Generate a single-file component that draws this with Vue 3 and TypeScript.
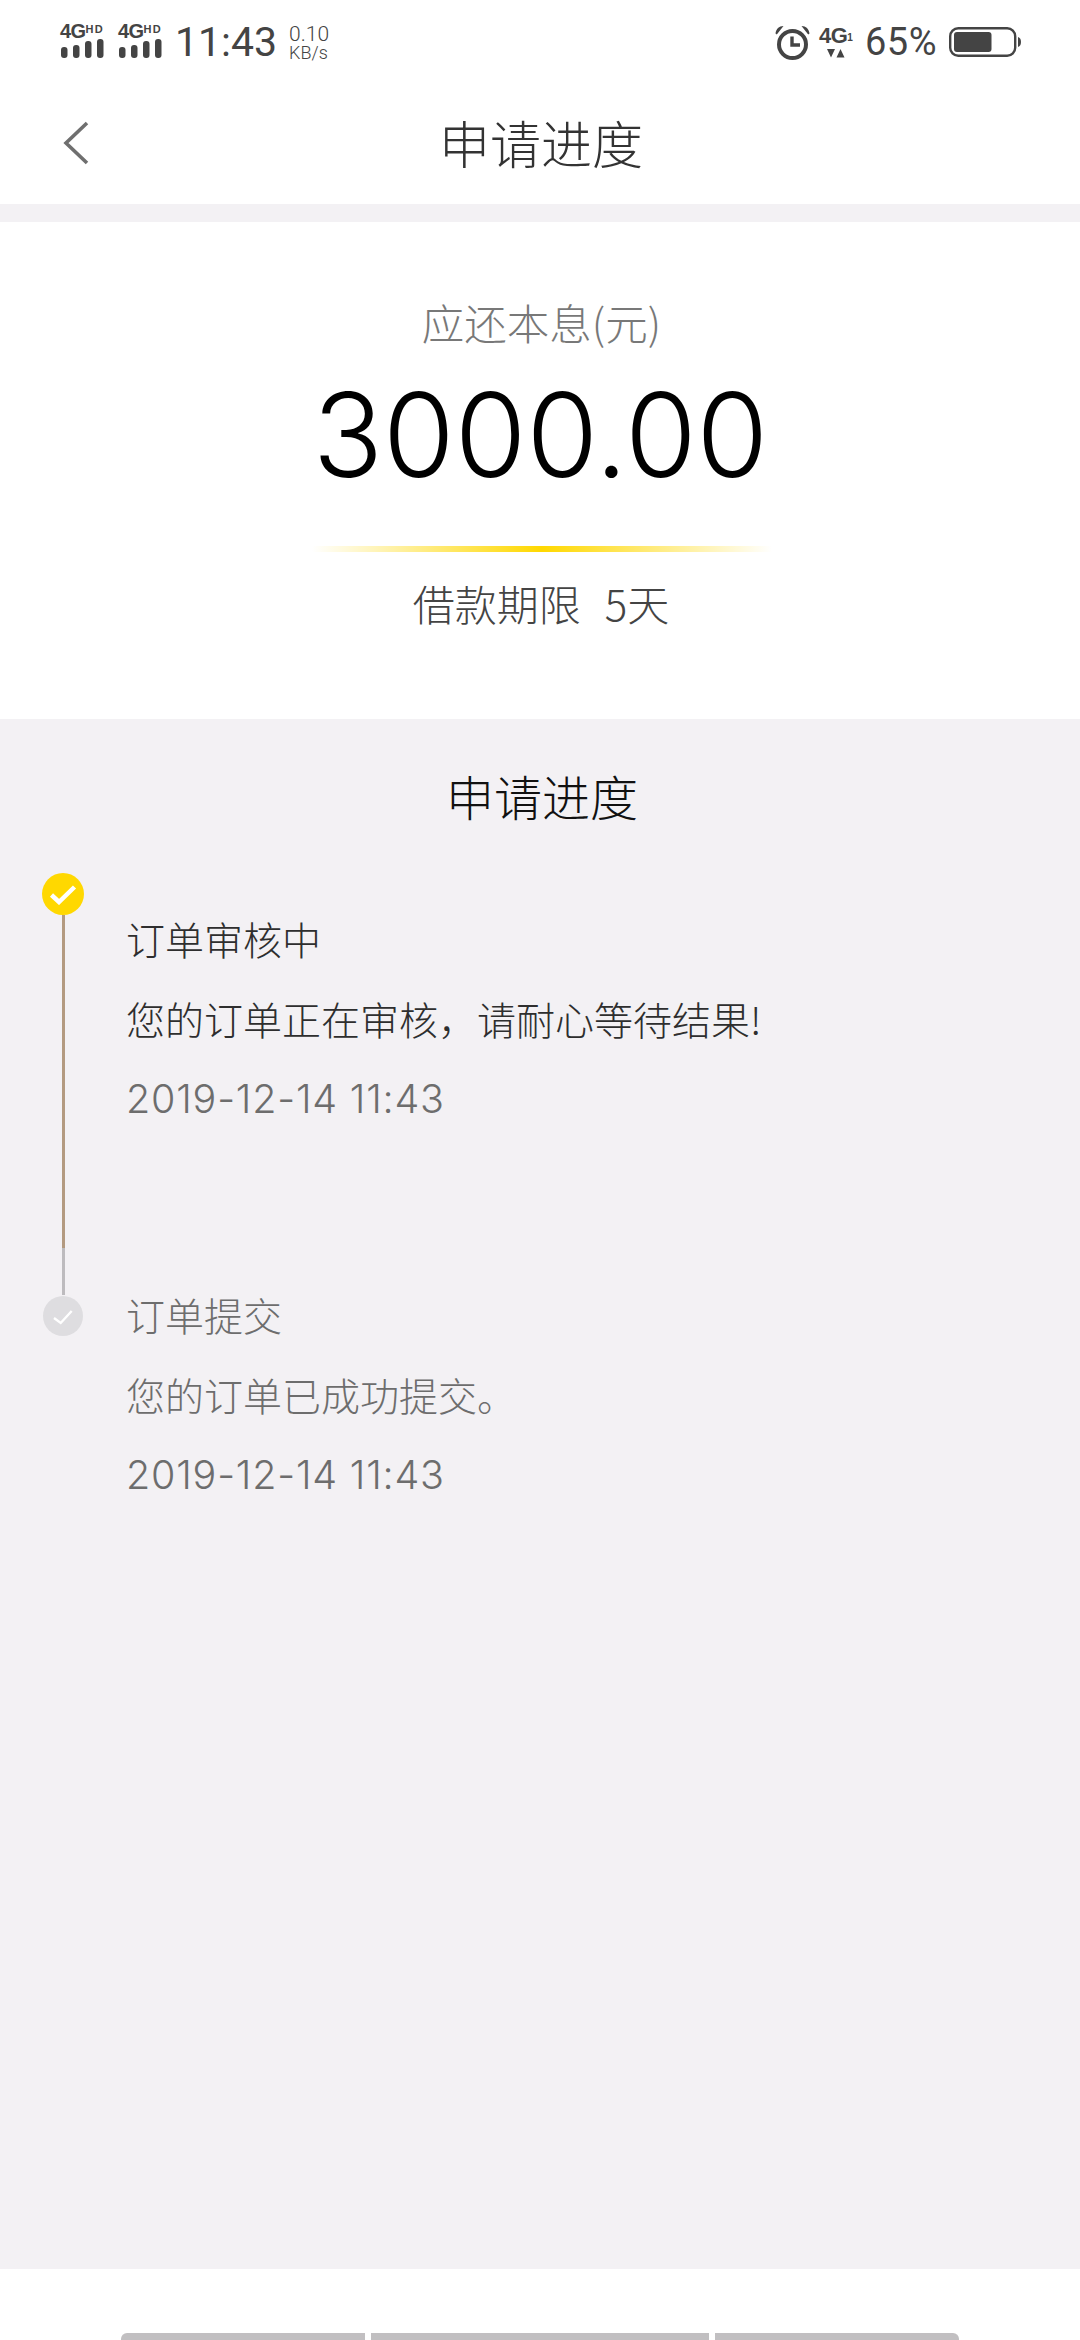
<script setup lang="ts">
interface Step {
  title: string
  detail: string
  time: string
  active: boolean
  check: string
  checkWidth: number
}

const steps: Step[] = [
  {
    title: '订单审核中',
    detail: '您的订单正在审核，请耐心等待结果!',
    time: '2019-12-14 11:43',
    active: true,
    check: 'M2.500 12 10 19 25.500 4',
    checkWidth: 4.5,
  },
  {
    title: '订单提交',
    detail: '您的订单已成功提交。',
    time: '2019-12-14 11:43',
    active: false,
    check: 'M5 13 11.700 18 22.700 6',
    checkWidth: 2.4,
  },
]
</script>

<template>
  <div class="page">
    <header class="top">
      <div class="status">
        <div class="status-left">
          <div v-for="n in 2" :key="n" class="net">
            <div class="net-label"><b>4G</b><i>HD</i></div>
            <svg class="net-bars" width="45" height="20" viewBox="0 0 45 20">
              <rect x="1" y="8" width="6.500" height="11" rx="3" />
              <rect x="13" y="6" width="6.500" height="13" rx="3" />
              <rect x="25" y="2" width="6.500" height="17" rx="3" />
              <rect x="37" y="0" width="6.500" height="19" rx="3" />
            </svg>
          </div>
          <span class="clock">11:43</span>
          <div class="speed"><span>0.10</span><span>KB/s</span></div>
        </div>
        <div class="status-right">
          <svg class="alarm" width="35" height="35" viewBox="0 0 35 35">
            <circle cx="17.500" cy="19.500" r="13.500" fill="none" stroke="#444" stroke-width="4" />
            <path d="M17 11.500v8.500h8" fill="none" stroke="#444" stroke-width="3.400" />
            <path d="M.5 8.500C1 4 4 1 8.500 1L1.800 9.500zM34.500 8.500C34 4 31 1 26.500 1L33.200 9.500z" fill="#444" />
          </svg>
          <div class="net-one">
            <div class="net-one-label"><b>4G</b><i>1</i></div>
            <svg width="18" height="10" viewBox="0 0 18 10">
              <path d="M0 1h8L4 9.500zM9.500 9.500h8L13.500 1z" fill="#444" />
            </svg>
          </div>
          <span class="percent">65%</span>
          <svg class="battery" width="72" height="30" viewBox="0 0 72 30">
            <rect x="1.200" y="1.200" width="65" height="27.600" rx="8" fill="none" stroke="#444" stroke-width="2.400" />
            <rect x="5" y="5" width="37.500" height="20" rx="3" fill="#444" />
            <path d="M69 10c2 .5 3 2.500 3 5s-1 4.500-3 5z" fill="#444" />
          </svg>
        </div>
      </div>
      <div class="nav">
        <svg class="back" width="26" height="44" viewBox="0 0 26 44">
          <path d="M24 2 3 22l21 20" fill="none" stroke="#6f6f6f" stroke-width="3.600" />
        </svg>
        <h1 class="nav-title">申请进度</h1>
      </div>
    </header>

    <section class="summary">
      <p class="summary-label">应还本息(元)</p>
      <p class="summary-amount">3000.00</p>
      <div class="summary-line"></div>
      <p class="summary-term"><span>借款期限</span><span>5天</span></p>
    </section>

    <main class="progress">
      <h2 class="progress-title">申请进度</h2>
      <ol class="steps">
        <li v-for="step in steps" :key="step.title" class="step" :class="{ 'step-active': step.active }">
          <div class="rail">
            <span class="dot">
              <svg width="28" height="22" viewBox="0 0 28 22">
                <path :d="step.check" fill="none" stroke="#fff" :stroke-width="step.checkWidth" />
              </svg>
            </span>
            <template v-if="step.active">
              <span class="rail-gold"></span>
              <span class="rail-grey"></span>
            </template>
          </div>
          <div class="step-body">
            <p class="step-title">{{ step.title }}</p>
            <p class="step-detail">{{ step.detail }}</p>
            <p class="step-time">{{ step.time }}</p>
          </div>
        </li>
      </ol>
    </main>

    <footer class="foot">
      <div class="foot-bars">
        <span class="bar bar-left"></span>
        <span class="bar bar-mid"></span>
        <span class="bar bar-right"></span>
      </div>
    </footer>
  </div>
</template>

<style>
html,
body {
  margin: 0;
  padding: 0;
}
</style>

<style scoped>
.page {
  width: 1080px;
  height: 2340px;
  display: flex;
  flex-direction: column;
  overflow: hidden;
  background: #f3f1f4;
  font-family: "Noto Sans CJK SC", Roboto, sans-serif;
  font-weight: 300;
}
p,
h1,
h2,
ol {
  margin: 0;
  padding: 0;
  font-weight: inherit;
}
ol {
  list-style: none;
}

.top {
  height: 204px;
  background: #fff;
  display: flex;
  flex-direction: column;
  flex: none;
}
.status {
  height: 84px;
  flex: none;
  box-sizing: border-box;
  padding: 0 59px 0 60px;
  display: flex;
  justify-content: space-between;
  align-items: center;
  color: #444;
  font-family: Roboto, sans-serif;
}
.status-left,
.status-right {
  display: flex;
  align-items: center;
}
.net {
  width: 45px;
  margin-right: 13px;
  margin-top: -2px;
  display: flex;
  flex-direction: column;
}
.net-label {
  height: 15px;
  display: flex;
  align-items: flex-start;
  line-height: 15px;
  white-space: nowrap;
}
.net-label b {
  font-family: "Liberation Sans", sans-serif;
  font-size: 20px;
  font-weight: 700;
  letter-spacing: -0.6px;
}
.net-label i {
  font-family: "Liberation Sans", sans-serif;
  font-style: normal;
  font-weight: 700;
  font-size: 11px;
  line-height: 11px;
  letter-spacing: 1.2px;
}
.net-bars {
  display: block;
  fill: #444;
}
.clock {
  font-size: 41px;
  line-height: 48px;
  font-weight: 400;
  margin-left: -1px;
}
.speed {
  margin-left: 12px;
  display: flex;
  flex-direction: column;
  font-size: 21px;
  line-height: 21px;
  font-weight: 300;
}
.speed span:last-child {
  font-size: 18px;
  line-height: 16px;
}
.alarm {
  display: block;
}
.net-one {
  width: 36px;
  margin-left: 8px;
  display: flex;
  flex-direction: column;
  align-items: center;
}
.net-one-label {
  display: flex;
  align-items: flex-end;
  height: 20px;
  line-height: 20px;
  white-space: nowrap;
}
.net-one-label b {
  font-family: "Liberation Sans", sans-serif;
  font-size: 22px;
  font-weight: 700;
  letter-spacing: -0.6px;
}
.net-one-label i {
  font-family: "Liberation Sans", sans-serif;
  font-style: normal;
  font-weight: 700;
  font-size: 10px;
  line-height: 16px;
}
.net-one svg {
  display: block;
  margin-top: 2px;
}
.percent {
  font-size: 38px;
  font-weight: 400;
  margin-left: 11px;
  letter-spacing: 0.5px;
}
.battery {
  display: block;
  margin-left: 12px;
}

.nav {
  flex: 1;
  position: relative;
  display: flex;
  justify-content: center;
  align-items: center;
}
.back {
  position: absolute;
  left: 63px;
  top: 37px;
}
.nav-title {
  font-size: 51px;
  line-height: 64px;
  color: #333;
  margin-top: -4px;
  margin-left: 2px;
}

.summary {
  margin-top: 18px;
  height: 497px;
  background: #fff;
  flex: none;
  box-sizing: border-box;
  padding-top: 70px;
  display: flex;
  flex-direction: column;
  align-items: center;
}
.summary-label {
  font-size: 42.500px;
  line-height: 60px;
  color: #787878;
  margin-left: 3px;
}
.summary-amount {
  font-family: Inter, sans-serif;
  font-weight: 300;
  font-size: 116px;
  line-height: 140px;
  color: #000;
  margin-top: 13px;
  margin-left: 1px;
}
.summary-line {
  width: 460px;
  height: 6px;
  margin-top: 41px;
  margin-left: 4px;
  background: linear-gradient(90deg, rgba(255, 216, 0, 0), #ffd800 50%, rgba(255, 216, 0, 0));
}
.summary-term {
  display: flex;
  gap: 24px;
  font-size: 42px;
  line-height: 60px;
  color: #444;
  margin-top: 21px;
  margin-left: 2px;
}

.progress {
  flex: 1;
  min-height: 0;
}
.progress-title {
  text-align: center;
  font-size: 48px;
  line-height: 64px;
  color: #111;
  padding-top: 44px;
  margin-left: 4px;
}
.steps {
  margin-top: 46px;
}
.step {
  display: flex;
  padding-left: 42px;
}
.rail {
  width: 42px;
  display: flex;
  flex-direction: column;
  align-items: center;
  flex: none;
}
.dot {
  width: 40px;
  height: 40px;
  margin-top: 1px;
  border-radius: 50%;
  flex: none;
  background: #dedde0;
  display: flex;
  align-items: center;
  justify-content: center;
}
.step-active .dot {
  width: 42px;
  height: 42px;
  margin-top: 0;
  background: #ffd800;
}
.rail-gold {
  width: 3px;
  height: 333px;
  background: #b39a80;
}
.rail-grey {
  width: 3px;
  height: 47px;
  background: #bdbbbe;
}
.step-body {
  margin-left: 42px;
  font-size: 39px;
  line-height: 79px;
  color: #6d6d6d;
  white-space: nowrap;
}
.step:not(.step-active) .step-body {
  margin-top: -20px;
}
.step-active .step-body {
  margin-top: 26px;
  color: #2e2e2e;
  height: 0;
}
.step-detail {
  margin-top: 1px;
}
.step-time {
  color: #6d6d6d;
  font-family: Inter, sans-serif;
  font-size: 39.500px;
  font-weight: 300;
  letter-spacing: 0.8px;
  margin-top: 2px;
}

.foot {
  height: 71px;
  flex: none;
  background: #fff;
  box-sizing: border-box;
  padding-top: 64px;
  display: flex;
  justify-content: center;
  overflow: hidden;
}
.foot-bars {
  display: flex;
  gap: 6px;
}
.bar {
  height: 20px;
  background: #c1bfc1;
}
.bar-left {
  width: 244px;
  border-radius: 6px 0 0 0;
}
.bar-mid {
  width: 338px;
}
.bar-right {
  width: 244px;
  border-radius: 0 6px 0 0;
}
</style>
